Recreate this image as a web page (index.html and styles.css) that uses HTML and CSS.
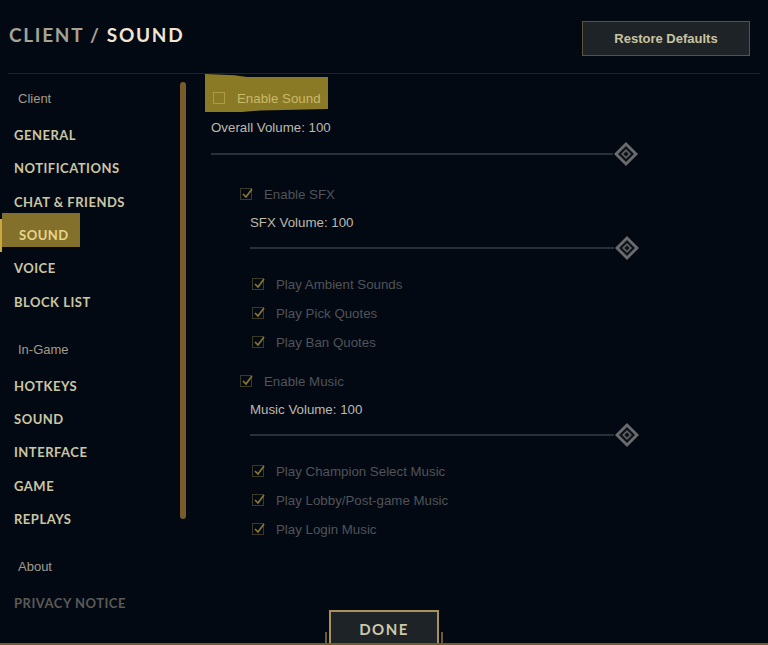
FILE: index.html
```html
<!DOCTYPE html>
<html lang="en">
<head>
  <meta charset="UTF-8" />
  <title>Client / Sound</title>
  <link rel="stylesheet" href="styles.css">
</head>
<body>

  <header class="top">
    <h1 class="crumb"><span class="crumb-parent">CLIENT /</span> <span class="crumb-current">SOUND</span></h1>
    <button class="btn-restore">Restore Defaults</button>
  </header>

  <main class="panel">
    <nav class="sidebar">
      <div class="menu">
        <div class="menu-label">Client</div>
        <a class="menu-item">GENERAL</a>
        <a class="menu-item">NOTIFICATIONS</a>
        <a class="menu-item">CHAT &amp; FRIENDS</a>
        <a class="menu-item active">SOUND</a>
        <a class="menu-item">VOICE</a>
        <a class="menu-item">BLOCK LIST</a>

        <div class="menu-label">In-Game</div>
        <a class="menu-item">HOTKEYS</a>
        <a class="menu-item">SOUND</a>
        <a class="menu-item">INTERFACE</a>
        <a class="menu-item">GAME</a>
        <a class="menu-item">REPLAYS</a>

        <div class="menu-label">About</div>
        <a class="menu-item muted">PRIVACY NOTICE</a>
      </div>
      <div class="scrollbar"></div>
    </nav>

    <section class="settings">
      <label class="check-row master">
        <span class="box"></span>
        <span>Enable Sound</span>
      </label>
      <div class="vol-label">Overall Volume: 100</div>
      <div class="slider">
        <div class="track"></div>
        <svg class="thumb" width="26" height="26" viewBox="0 0 26 26">
          <polygon points="13,1 25,13 13,25 1,13" fill="#6a6b6c"/>
          <polygon points="13,5 21,13 13,21 5,13" fill="#0c1119"/>
          <polygon points="13,8 18,13 13,18 8,13" fill="#5d5e60"/>
          <polygon points="13,10.5 15.5,13 13,15.5 10.5,13" fill="#0c1119"/>
        </svg>
      </div>

      <div class="group">
        <label class="check-row">
          <span class="box checked"><svg width="12" height="12" viewBox="0 0 12 12"><polyline points="2,6 5,9 11,1" /></svg></span>
          <span>Enable SFX</span>
        </label>
        <div class="vol-label">SFX Volume: 100</div>
        <div class="slider">
          <div class="track"></div>
          <svg class="thumb" width="26" height="26" viewBox="0 0 26 26">
            <polygon points="13,1 25,13 13,25 1,13" fill="#6a6b6c"/>
            <polygon points="13,5 21,13 13,21 5,13" fill="#0c1119"/>
            <polygon points="13,8 18,13 13,18 8,13" fill="#5d5e60"/>
            <polygon points="13,10.5 15.5,13 13,15.5 10.5,13" fill="#0c1119"/>
          </svg>
        </div>
        <div class="sub">
          <label class="check-row">
            <span class="box checked"><svg width="12" height="12" viewBox="0 0 12 12"><polyline points="2,6 5,9 11,1" /></svg></span>
            <span>Play Ambient Sounds</span>
          </label>
          <label class="check-row">
            <span class="box checked"><svg width="12" height="12" viewBox="0 0 12 12"><polyline points="2,6 5,9 11,1" /></svg></span>
            <span>Play Pick Quotes</span>
          </label>
          <label class="check-row">
            <span class="box checked"><svg width="12" height="12" viewBox="0 0 12 12"><polyline points="2,6 5,9 11,1" /></svg></span>
            <span>Play Ban Quotes</span>
          </label>
        </div>
      </div>

      <div class="group music">
        <label class="check-row">
          <span class="box checked"><svg width="12" height="12" viewBox="0 0 12 12"><polyline points="2,6 5,9 11,1" /></svg></span>
          <span>Enable Music</span>
        </label>
        <div class="vol-label">Music Volume: 100</div>
        <div class="slider">
          <div class="track"></div>
          <svg class="thumb" width="26" height="26" viewBox="0 0 26 26">
            <polygon points="13,1 25,13 13,25 1,13" fill="#6a6b6c"/>
            <polygon points="13,5 21,13 13,21 5,13" fill="#0c1119"/>
            <polygon points="13,8 18,13 13,18 8,13" fill="#5d5e60"/>
            <polygon points="13,10.5 15.5,13 13,15.5 10.5,13" fill="#0c1119"/>
          </svg>
        </div>
        <div class="sub">
          <label class="check-row">
            <span class="box checked"><svg width="12" height="12" viewBox="0 0 12 12"><polyline points="2,6 5,9 11,1" /></svg></span>
            <span>Play Champion Select Music</span>
          </label>
          <label class="check-row">
            <span class="box checked"><svg width="12" height="12" viewBox="0 0 12 12"><polyline points="2,6 5,9 11,1" /></svg></span>
            <span>Play Lobby/Post-game Music</span>
          </label>
          <label class="check-row">
            <span class="box checked"><svg width="12" height="12" viewBox="0 0 12 12"><polyline points="2,6 5,9 11,1" /></svg></span>
            <span>Play Login Music</span>
          </label>
        </div>
      </div>
    </section>
  </main>

  <footer class="bottom">
    <button class="btn-done">DONE</button>
  </footer>

</body>
</html>
```

FILE: styles.css
```css
* {
  box-sizing: border-box;
}

html, body {
  margin: 0;
  height: 100%;
}

body {
  background: #030913;
  font-family: "Liberation Sans", Arial, sans-serif;
  font-size: 13.3px;
  color: #a09b8c;
  display: flex;
  flex-direction: column;
  overflow: hidden;
}

/* header */

.top {
  height: 74px;
  flex: none;
  margin: 0 8px;
  padding-right: 10px;
  border-bottom: 1px solid #1f242b;
  display: flex;
  justify-content: space-between;
  align-items: flex-start;
}

.crumb {
  margin: 24px 0 0 1px;
  font-family: Lato, sans-serif;
  font-weight: 700;
  font-size: 19px;
  line-height: 22px;
  letter-spacing: 1.7px;
}

.crumb-parent {
  color: #a3a396;
}

.crumb-current {
  color: #f0e6d2;
}

.btn-restore {
  margin-top: 21px;
  width: 168px;
  height: 35px;
  background: #1e2328;
  border: 1px solid #595638;
  color: #c9c3a2;
  font-family: "Liberation Sans", Arial, sans-serif;
  font-weight: 700;
  font-size: 13px;
  cursor: pointer;
}

/* main area */

.panel {
  flex: 1;
  min-height: 0;
  display: grid;
  grid-template-columns: 205px 1fr;
}

.sidebar {
  display: flex;
}

.menu {
  flex: 1;
  padding-top: 7.8px;
}

.menu-label {
  height: 33.4px;
  line-height: 33.4px;
  padding-left: 18px;
  margin: 13.6px 0 3.6px;
  color: #a09b8c;
  font-size: 13px;
}

.menu-label:first-child {
  margin-top: 0;
}

.menu-item {
  display: block;
  position: relative;
  isolation: isolate;
  height: 33.4px;
  line-height: 33.4px;
  padding-left: 14px;
  font-family: Lato, sans-serif;
  font-weight: 700;
  font-size: 13px;
  letter-spacing: 0.5px;
  color: #cbc6a4;
  cursor: pointer;
}

.menu-item.active {
  padding-left: 17px;
  border-left: 2px solid #c9a83c;
  color: #e8d58c;
}

.menu-item.active::before {
  content: "";
  position: absolute;
  left: 0;
  top: -6px;
  width: 78px;
  height: 34px;
  background: #83702a;
  z-index: -1;
}

.menu-item.muted {
  color: #5b5a56;
}

.scrollbar {
  width: 6px;
  height: 437px;
  margin: 8px 19px 0 0;
  background: #785b2b;
  border-radius: 3px;
}

/* settings column */

.settings {
  padding-top: 9.5px;
}

.check-row {
  display: flex;
  align-items: center;
  gap: 12px;
  height: 29px;
  color: #505357;
}

.check-row.master {
  position: relative;
  isolation: isolate;
  width: 123px;
  padding-left: 8px;
  color: #c9b968;
}

.check-row.master::before {
  content: "";
  position: absolute;
  left: 0;
  top: -9.5px;
  width: 123px;
  height: 38px;
  background: #8a7a26;
  clip-path: polygon(0 0, 24% 3%, 34% 8%, 100% 8%, 100% 92%, 45% 96%, 30% 100%, 0 100%);
  z-index: -1;
}

.box {
  flex: none;
  width: 12px;
  height: 12px;
  border: 1px solid #3b3a27;
  position: relative;
}

.master .box {
  border-color: #ad9a44;
}

.box svg {
  position: absolute;
  left: 0;
  top: -1px;
}

.box polyline {
  fill: none;
  stroke: #8a7631;
  stroke-width: 1.7;
}

.vol-label {
  height: 29px;
  line-height: 29px;
  padding-left: 6px;
  color: #bcb9ae;
}

.slider {
  display: flex;
  align-items: center;
  height: 24px;
  width: 428px;
  margin-left: 6px;
}

.track {
  flex: 1;
  height: 2px;
  background: #2b2f37;
}

.thumb {
  flex: none;
}

.group {
  margin-top: 14px;
  padding-left: 35px;
}

.group.music {
  margin-top: 10px;
}

.group .vol-label {
  height: 28px;
  line-height: 28px;
  padding-left: 10px;
}

.group .slider {
  height: 22px;
  width: 390px;
  margin-left: 10px;
}

.sub {
  margin-top: 11px;
  padding-left: 12px;
}

/* footer */

.bottom {
  flex: none;
  height: 35px;
  display: flex;
  justify-content: center;
  border-bottom: 2px solid #785b2b;
}

.btn-done {
  position: relative;
  width: 110px;
  height: 33px;
  padding-top: 4px;
  background: #1e2328;
  border: 2px solid #a8915a;
  border-bottom: none;
  color: #cdc9a8;
  font-family: Lato, sans-serif;
  font-weight: 700;
  font-size: 15px;
  letter-spacing: 1.5px;
  cursor: pointer;
}

.btn-done::before,
.btn-done::after {
  content: "";
  position: absolute;
  bottom: 0;
  width: 2px;
  height: 11px;
  background: #6e5a30;
}

.btn-done::before {
  left: -6px;
}

.btn-done::after {
  right: -6px;
}
```
